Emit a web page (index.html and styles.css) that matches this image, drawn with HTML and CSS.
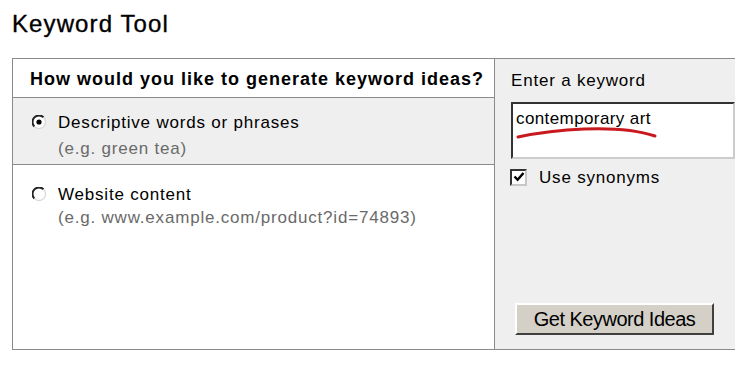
FILE: index.html
```html
<!DOCTYPE html>
<html lang="en">
<head>
  <meta charset="UTF-8">
  <title>Keyword Tool</title>
  <link rel="stylesheet" href="styles.css">
</head>
<body>
  <h1 class="title">Keyword Tool</h1>
  <div class="tool">
    <div class="choices">
      <div class="question">How would you like to generate keyword ideas?</div>
      <div class="option selected">
        <svg class="radio" width="14" height="14" viewBox="0 0 14 14">
          <circle cx="7" cy="7" r="6" fill="#fff"/>
          <path d="M2.4 11.6 A6.2 6.2 0 0 1 11.6 2.4" fill="none" stroke="#222" stroke-width="2"/>
          <path d="M11.6 2.4 A6.2 6.2 0 0 1 2.4 11.6" fill="none" stroke="#d8d8d8" stroke-width="1.2"/>
          <circle cx="7" cy="7" r="2.6" fill="#000"/>
        </svg>
        <div class="option-text">
          <div class="option-label">Descriptive words or phrases</div>
          <div class="hint">(e.g. green tea)</div>
        </div>
      </div>
      <div class="option website">
        <svg class="radio" width="14" height="14" viewBox="0 0 14 14">
          <circle cx="7" cy="7" r="6" fill="#fff"/>
          <path d="M2.4 11.6 A6.2 6.2 0 0 1 11.6 2.4" fill="none" stroke="#222" stroke-width="2"/>
          <path d="M11.6 2.4 A6.2 6.2 0 0 1 2.4 11.6" fill="none" stroke="#d8d8d8" stroke-width="1.2"/>
        </svg>
        <div class="option-text">
          <div class="option-label">Website content</div>
          <div class="hint hint-url">(e.g. www.example.com/product?id=74893)</div>
        </div>
      </div>
    </div>
    <div class="entry">
      <label class="entry-label" for="keyword">Enter a keyword</label>
      <div class="keyword-wrap">
        <textarea id="keyword" class="keyword" rows="2">contemporary art</textarea>
        <!-- hand drawn underline over the typed keyword -->
        <svg class="scribble" width="160" height="44" viewBox="0 0 160 44">
          <path d="M7 35 C 40 28, 105 21, 144 34" fill="none" stroke="#c8191f" stroke-width="3" stroke-linecap="round"/>
        </svg>
      </div>
      <div class="synonyms">
        <span class="check">
          <svg width="12" height="12" viewBox="0 0 12 12">
            <path d="M1.5 5.5 L4.6 8.8 L10.5 2" fill="none" stroke="#000" stroke-width="2.4"/>
          </svg>
        </span>
        <span>Use synonyms</span>
      </div>
      <button class="ideas" type="button">Get Keyword Ideas</button>
    </div>
  </div>
</body>
</html>
```
FILE: styles.css
```css
body { margin: 0; padding: 0 0 0 12px; background: #fff; color: #000; font-family: "Liberation Sans", Arial, sans-serif; overflow: hidden; }
.title { margin: 10px 0 20px; font-size: 24px; font-weight: normal; line-height: 28px; letter-spacing: 1.1px; -webkit-text-stroke: 0.35px #000; }
.tool { display: flex; height: 292px; border: 1px solid #8a8a8a; border-right: none; box-sizing: border-box; }
.choices { width: 481px; flex: none; border-right: 1px solid #8a8a8a; display: flex; flex-direction: column; }
.question { height: 39px; box-sizing: border-box; padding: 9px 0 0 17px; border-bottom: 1px solid #8a8a8a; background: #fff; font-size: 18px; font-weight: bold; line-height: 22px; letter-spacing: 1px; }
.option { display: flex; align-items: flex-start; font-size: 17px; letter-spacing: 0.8px; }
.option.selected { height: 67px; box-sizing: border-box; padding-top: 14px; background: #efefef; border-bottom: 1px solid #8a8a8a; }
.option.website { flex: 1; padding-top: 19px; background: #fff; }
.radio { margin: 3px 0 0 19px; flex: none; }
.option-text { margin-left: 12px; }
.option-label { line-height: 22px; }
.hint { color: #6a6a6a; line-height: 24px; margin-top: 3px; }
.hint-url { margin-top: 0; }
.entry { flex: 1; background: #efefef; padding: 11px 0 0 16px; display: flex; flex-direction: column; font-size: 17px; letter-spacing: 0.8px; }
.entry-label { line-height: 22px; }
.keyword-wrap { position: relative; margin-top: 10px; }
.keyword { display: block; width: 100%; height: 57px; box-sizing: border-box; margin: 0; padding: 5px 3px; border: 2px solid #ccc; border-top-color: #333; border-left-color: #333; background: #fff; font: 17px/20px "Liberation Sans", Arial, sans-serif; letter-spacing: 0.4px; color: #000; resize: none; outline: none; overflow: hidden; }
.scribble { position: absolute; left: 0; top: 0; }
.synonyms { display: flex; align-items: center; margin-top: 8px; line-height: 22px; }
.check { width: 17px; height: 17px; box-sizing: border-box; border: 2px solid #c8c8c8; border-top-color: #333; border-left-color: #333; background: #fff; display: flex; align-items: center; justify-content: center; margin: -2px 12px 0 -1px; }
.ideas { margin: auto 0 14px 4px; align-self: flex-start; width: 199px; height: 32px; padding: 0; background: #d4d0c8; border: 2px solid #fff; border-right-color: #404040; border-bottom-color: #404040; font: 20px "Liberation Sans", Arial, sans-serif; letter-spacing: -0.5px; color: #000; cursor: pointer; }
```
